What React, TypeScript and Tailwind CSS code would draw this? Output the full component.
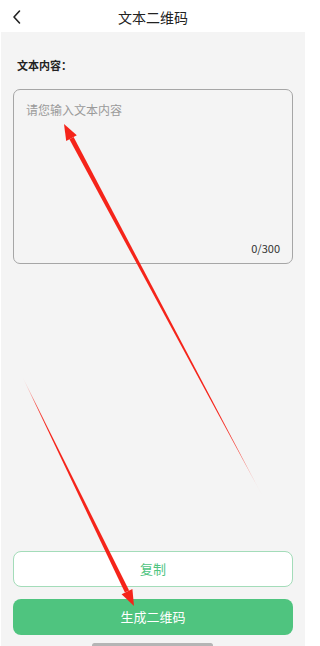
import React from "react";

export default function App() {
  return (
    <div
      className="relative w-[308px] h-[646px] overflow-hidden bg-white flex flex-col"
      style={{ fontFamily: '"Noto Sans CJK SC", "Noto Sans", sans-serif' }}
    >
      {/* Header */}
      <div className="h-[32px] shrink-0 flex items-center relative">
        <svg
          className="absolute left-[11px] top-[9px]"
          width="12"
          height="16"
          viewBox="0 0 12 16"
          fill="none"
        >
          <path d="M8.5 2 L3 8 L8.5 14" stroke="#222" strokeWidth="1.6" strokeLinecap="round" strokeLinejoin="round" />
        </svg>
        <div className="flex-1 text-center text-[14px] leading-none text-[#222] pt-[1px] pr-[2px]">文本二维码</div>
      </div>

      {/* Content */}
      <div className="flex-1 flex flex-col bg-[#f4f4f4] ml-[1px] mr-[3px] px-[12px]">
        <div className="pt-[26px] pl-[4px] text-[11px] leading-[14px] font-bold text-[#222]">文本内容：</div>
        <div className="mt-[17px] h-[175px] rounded-[7px] border border-[#a6a6a6] flex flex-col px-[12px] pt-[12px] pb-[8px]">
          <div className="text-[12px] leading-[16px] text-[#9a9a9a]">请您输入文本内容</div>
          <div className="flex-1" />
          <div className="text-right text-[11px] leading-[14px] text-[#333]">0/300</div>
        </div>
        <div className="flex-1" />
        <div className="h-[36px] rounded-[8px] border border-[#a3dcb9] bg-white flex items-center justify-center text-[13px] text-[#4fc47f]">
          复制
        </div>
        <div className="mt-[12px] h-[36px] rounded-[8px] bg-[#4fc47f] flex items-center justify-center text-[13px] text-white">
          生成二维码
        </div>
        <div className="mt-[8px] h-[3px] flex justify-center">
          <div className="w-[121px] h-[5px] rounded-full bg-[#b5b5b5] ml-[-2px]" />
        </div>
      </div>

      {/* Annotation arrows */}
      <svg
        className="absolute left-0 top-0 pointer-events-none"
        width="308"
        height="646"
        viewBox="0 0 308 646"
      >
        <defs>
          <linearGradient id="g1" gradientUnits="userSpaceOnUse" x1="263" y1="497" x2="64" y2="124">
            <stop offset="0" stopColor="#f5241a" stopOpacity="0" />
            <stop offset="0.12" stopColor="#f5241a" stopOpacity="0.85" />
            <stop offset="0.25" stopColor="#f5241a" stopOpacity="1" />
            <stop offset="1" stopColor="#f5241a" stopOpacity="1" />
          </linearGradient>
          <linearGradient id="g2" gradientUnits="userSpaceOnUse" x1="22" y1="376" x2="134" y2="606">
            <stop offset="0" stopColor="#f5241a" stopOpacity="0" />
            <stop offset="0.12" stopColor="#f5241a" stopOpacity="0.85" />
            <stop offset="0.25" stopColor="#f5241a" stopOpacity="1" />
            <stop offset="1" stopColor="#f5241a" stopOpacity="1" />
          </linearGradient>
        </defs>
        <polygon points="263,497 73.6,137.0 69.4,139.2" fill="url(#g1)" />
        <polygon points="64,124 76.8,135.3 66.2,140.9" fill="#f5241a" />
        <polygon points="22,376 124.9,592.6 129.1,590.5" fill="url(#g2)" />
        <polygon points="134,606 121.6,594.2 132.4,589.0" fill="#f5241a" />
      </svg>
    </div>
  );
}
